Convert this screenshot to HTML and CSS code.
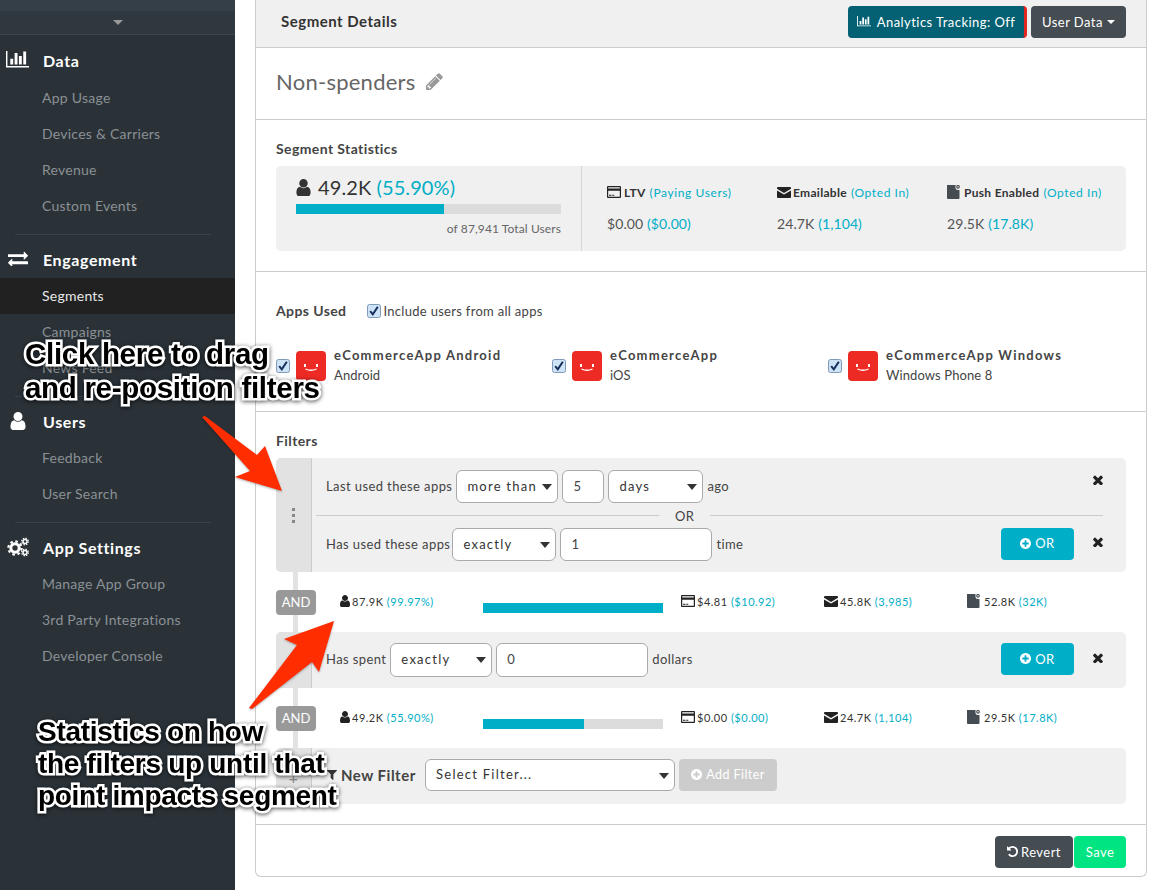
FILE: index.html
```html
<!DOCTYPE html>
<html lang="en">
<head>
  <meta charset="UTF-8">
  <title>Segment Details</title>
  <link rel="stylesheet" href="styles.css">
</head>
<body>
  <svg class="sprite" xmlns="http://www.w3.org/2000/svg">
    <defs>
      <symbol id="i-user" viewBox="256 128 1280 1536"><path d="M1536 1399q0 109-62.500 187t-150.500 78h-854q-88 0-150.500-78t-62.500-187q0-85 8.500-160.500t31.500-152 58.500-131 94-89 134.500-34.500q131 128 313 128t313-128q76 0 134.500 34.500t94 89 58.500 131 31.500 152 8.500 160.500zm-256-887q0 159-112.500 271.500t-271.500 112.500-271.500-112.500-112.500-271.500 112.500-271.500 271.500-112.500 271.500 112.500 112.500 271.500z"/></symbol>
      <symbol id="i-chart" viewBox="0 256 2048 1408"><path d="M640 896v512h-256v-512h256zm384-512v1024h-256v-1024h256zm1024 1152v128h-2048v-1536h128v1408h1920zm-640-896v768h-256v-768h256zm384-384v1152h-256v-1152h256z"/></symbol>
      <symbol id="i-swap" viewBox="0 256 1792 1280"><path d="M1792 1184v192q0 13-9.500 22.500t-22.500 9.500h-1376v192q0 13-9.500 22.500t-22.500 9.500q-12 0-24-10l-319-320q-9-9-9-22 0-14 9-23l320-320q9-9 23-9 13 0 22.500 9.500t9.500 22.500v192h1376q13 0 22.500 9.500t9.500 22.500zm0-544q0 14-9 23l-320 320q-9 9-23 9-13 0-22.500-9.500t-9.500-22.500v-192h-1376q-13 0-22.500-9.500t-9.500-22.500v-192q0-13 9.500-22.500t22.500-9.500h1376v-192q0-14 9-23t23-9q12 0 24 10l319 319q9 9 9 23z"/></symbol>
      <symbol id="i-cogs" viewBox="0 0 22 20">
        <circle cx="8" cy="11" r="4.2" fill="none" stroke="currentColor" stroke-width="3"/>
        <circle cx="8" cy="11" r="6.6" fill="none" stroke="currentColor" stroke-width="2.2" stroke-dasharray="2.6 2.6"/>
        <circle cx="18" cy="4.500" r="2" fill="none" stroke="currentColor" stroke-width="1.500"/>
        <circle cx="18" cy="4.500" r="3.300" fill="none" stroke="currentColor" stroke-width="1.300" stroke-dasharray="1.400 1.200"/>
        <circle cx="18" cy="15.500" r="2" fill="none" stroke="currentColor" stroke-width="1.500"/>
        <circle cx="18" cy="15.500" r="3.300" fill="none" stroke="currentColor" stroke-width="1.300" stroke-dasharray="1.400 1.200"/>
      </symbol>
      <symbol id="i-card" viewBox="0 0 14 12"><path fill-rule="evenodd" d="M1 0h12a1 1 0 0 1 1 1v10a1 1 0 0 1-1 1H1a1 1 0 0 1-1-1V1a1 1 0 0 1 1-1zm.2 1.200v1.300h11.600V1.200zm0 3.600v6h11.600v-6zM2 8.700h2.500v1H2zm3.300 0h2v1h-2z"/></symbol>
      <symbol id="i-mail" viewBox="0 0 14 11"><path d="M1 0h12a1 1 0 0 1 1 1v.8L7 6 0 1.800V1a1 1 0 0 1 1-1zM0 3.400l7 4.200 7-4.200V10a1 1 0 0 1-1 1H1a1 1 0 0 1-1-1z"/></symbol>
      <symbol id="i-push" viewBox="0 0 13 14"><path fill="#454c52" d="M0 0h8.500v2.500a2.500 2.500 0 0 0 2.500 2.500h1.500v8a1 1 0 0 1-1 1H1a1 1 0 0 1-1-1z"/><circle cx="11" cy="1.800" r="1.300" fill="none" stroke="#454c52" stroke-width="1.100"/></symbol>
      <symbol id="i-times" viewBox="300 300 1200 1200"><path d="M1490 1322q0 40-28 68l-136 136q-28 28-68 28t-68-28l-294-294-294 294q-28 28-68 28t-68-28l-136-136q-28-28-28-68t28-68l294-294-294-294q-28-28-28-68t28-68l136-136q28-28 68-28t68 28l294 294 294-294q28-28 68-28t68 28l136 136q28 28 28 68t-28 68l-294 294 294 294q28 28 28 68z"/></symbol>
      <symbol id="i-plus" viewBox="128 128 1536 1536"><path d="M1344 960v-128q0-26-19-45t-45-19h-256v-256q0-26-19-45t-45-19h-128q-26 0-45 19t-19 45v256h-256q-26 0-45 19t-19 45v128q0 26 19 45t45 19h256v256q0 26 19 45t45 19h128q26 0 45-19t19-45v-256h256q26 0 45-19t19-45zm320-64q0 209-103 385.500t-279.500 279.500-385.500 103-385.500-103-279.500-279.500-103-385.500 103-385.500 279.500-279.500 385.500-103 385.500 103 279.500 279.500 103 385.500z"/></symbol>
      <symbol id="i-undo" viewBox="128 128 1536 1536"><path d="M1664 896q0 156-61 298t-164 245-245 164-298 61q-172 0-327-72.500t-264-204.500q-7-10-6.500-22.500t8.500-20.500l137-138q10-9 25-9 16 2 23 12 73 95 179 147t225 52q104 0 198.500-40.500t163.500-109.500 109.500-163.500 40.500-198.500-40.500-198.500-109.500-163.500-163.500-109.500-198.500-40.500q-98 0-188 35.500t-160 101.500l137 138q31 30 14 69-17 40-59 40h-448q-26 0-45-19t-19-45v-448q0-42 40-59 39-17 69 14l130 129q107-101 244.500-156.500t284.500-55.500q156 0 298 61t245 164 164 245 61 298z"/></symbol>
      <symbol id="i-filter" viewBox="190 256 1410 1408"><path d="M1595 295q17 41-14 70l-493 493v742q0 42-39 59-13 5-25 5-27 0-45-19l-256-256q-19-19-19-45v-486l-493-493q-31-29-14-70 17-39 59-39h1280q42 0 59 39z"/></symbol>
      <symbol id="i-pencil" viewBox="128 128 1536 1536"><path d="M491 1536l91-91-235-235-91 91v107h128v128h107zm523-928q0-22-22-22-10 0-17 7l-542 542q-7 7-7 17 0 22 22 22 10 0 17-7l542-542q7-7 7-17zm-54-192l416 416-832 832h-416v-416zm683 96q0 53-37 90l-166 166-416-416 166-165q36-38 90-38 53 0 91 38l235 234q37 39 37 91z"/></symbol>
      <symbol id="i-check" viewBox="0 0 14 14"><rect x=".5" y=".5" width="13" height="13" rx="2" fill="#cfe3f7" stroke="#7f9ab8"/><path d="M3.200 7.200l2.600 3.200 5-7.600" fill="none" stroke="#16305c" stroke-width="2"/></symbol>
      <symbol id="i-app" viewBox="0 0 30 30"><rect width="30" height="30" rx="4" fill="#ee2a24"/><rect x="8" y="13" width="2" height="3" fill="#fff"/><rect x="20" y="13" width="2" height="3" fill="#fff"/><path d="M9.500 18q5.500 2.500 11 0" fill="none" stroke="#fff" stroke-width="1.300"/></symbol>
    </defs>
  </svg>

  <aside class="sidebar">
    <div class="side-top"></div>
    <div class="side-toggle"><span class="side-caret"></span></div>

    <nav class="side-group">
      <div class="side-head"><svg class="side-icon chart"><use href="#i-chart"/></svg>Data</div>
      <a class="side-link">App Usage</a>
      <a class="side-link">Devices &amp; Carriers</a>
      <a class="side-link">Revenue</a>
      <a class="side-link">Custom Events</a>
    </nav>
    <nav class="side-group">
      <div class="side-head"><svg class="side-icon swap"><use href="#i-swap"/></svg>Engagement</div>
      <a class="side-link active">Segments</a>
      <a class="side-link">Campaigns</a>
      <a class="side-link">News Feed</a>
    </nav>
    <nav class="side-group">
      <div class="side-head"><svg class="side-icon user"><use href="#i-user"/></svg>Users</div>
      <a class="side-link">Feedback</a>
      <a class="side-link">User Search</a>
    </nav>
    <nav class="side-group last">
      <div class="side-head"><svg class="side-icon cogs"><use href="#i-cogs"/></svg>App Settings</div>
      <a class="side-link">Manage App Group</a>
      <a class="side-link">3rd Party Integrations</a>
      <a class="side-link">Developer Console</a>
    </nav>
  </aside>

  <main class="panel">
    <header class="panel-head">
      <h2>Segment Details</h2>
      <div class="head-actions">
        <button class="btn btn-track"><svg class="btn-chart"><use href="#i-chart"/></svg>Analytics Tracking: Off</button>
        <button class="btn btn-dark">User Data<span class="mini-caret"></span></button>
      </div>
    </header>

    <section class="title-row">
      <h1>Non-spenders</h1>
      <svg class="pencil"><use href="#i-pencil"/></svg>
    </section>

    <section class="section stats-section">
      <h3>Segment Statistics</h3>
      <div class="stat-box">
        <div class="stat-main">
          <div class="stat-big"><svg class="big-user"><use href="#i-user"/></svg>49.2K <span class="teal">(55.90%)</span></div>
          <div class="bar"><div class="bar-fill" style="width:55.9%"></div></div>
          <div class="stat-total">of 87,941 Total Users</div>
        </div>
        <div class="stat-col">
          <div class="stat-label"><svg class="ic-card"><use href="#i-card"/></svg><b>LTV</b><span class="teal">(Paying Users)</span></div>
          <div class="stat-value">$0.00 <span class="teal">($0.00)</span></div>
        </div>
        <div class="stat-col">
          <div class="stat-label"><svg class="ic-mail"><use href="#i-mail"/></svg><b>Emailable</b><span class="teal">(Opted In)</span></div>
          <div class="stat-value">24.7K <span class="teal">(1,104)</span></div>
        </div>
        <div class="stat-col">
          <div class="stat-label"><svg class="ic-push"><use href="#i-push"/></svg><b>Push Enabled</b><span class="teal">(Opted In)</span></div>
          <div class="stat-value">29.5K <span class="teal">(17.8K)</span></div>
        </div>
      </div>
    </section>

    <section class="section apps-section">
      <div class="apps-top">
        <h3>Apps Used</h3>
        <label class="check-all"><svg class="check"><use href="#i-check"/></svg>Include users from all apps</label>
      </div>
      <div class="apps-list">
        <div class="app">
          <svg class="check"><use href="#i-check"/></svg>
          <svg class="app-icon"><use href="#i-app"/></svg>
          <div><div class="app-name">eCommerceApp Android</div><div class="app-os">Android</div></div>
        </div>
        <div class="app">
          <svg class="check"><use href="#i-check"/></svg>
          <svg class="app-icon"><use href="#i-app"/></svg>
          <div><div class="app-name">eCommerceApp</div><div class="app-os">iOS</div></div>
        </div>
        <div class="app">
          <svg class="check"><use href="#i-check"/></svg>
          <svg class="app-icon"><use href="#i-app"/></svg>
          <div><div class="app-name">eCommerceApp Windows</div><div class="app-os">Windows Phone 8</div></div>
        </div>
      </div>
    </section>

    <section class="section filters-section">
      <h3>Filters</h3>

      <div class="filter">
        <div class="handle"><span class="dots"></span></div>
        <div class="filter-body">
          <div class="filter-row">
            <span class="lbl">Last used these apps</span>
            <span class="select w-102"><select><option>more than</option></select></span>
            <input class="field w-42" type="text" value="5">
            <span class="select w-95"><select><option>days</option></select></span>
            <span class="lbl">ago</span>
            <svg class="remove up"><use href="#i-times"/></svg>
          </div>
          <div class="or-line"><span>OR</span></div>
          <div class="filter-row">
            <span class="lbl tight">Has used these apps</span>
            <span class="select w-104"><select><option>exactly</option></select></span>
            <input class="field w-152" type="text" value="1">
            <span class="lbl">time</span>
            <button class="btn btn-or"><svg class="plus"><use href="#i-plus"/></svg>OR</button>
            <svg class="remove"><use href="#i-times"/></svg>
          </div>
        </div>
      </div>

      <div class="stat-row">
        <span class="and">AND</span>
        <div class="mini first"><svg class="ic-user"><use href="#i-user"/></svg>87.9K <span class="teal">(99.97%)</span></div>
        <div class="bar mini-bar"><div class="bar-fill" style="width:100%"></div></div>
        <div class="mini"><svg class="ic-card"><use href="#i-card"/></svg>$4.81 <span class="teal">($10.92)</span></div>
        <div class="mini"><svg class="ic-mail"><use href="#i-mail"/></svg>45.8K <span class="teal">(3,985)</span></div>
        <div class="mini"><svg class="ic-push"><use href="#i-push"/></svg>52.8K <span class="teal">(32K)</span></div>
      </div>

      <div class="filter">
        <div class="handle"></div>
        <div class="filter-body single">
          <div class="filter-row">
            <span class="lbl">Has spent</span>
            <span class="select w-102"><select><option>exactly</option></select></span>
            <input class="field w-152" type="text" value="0">
            <span class="lbl">dollars</span>
            <button class="btn btn-or"><svg class="plus"><use href="#i-plus"/></svg>OR</button>
            <svg class="remove"><use href="#i-times"/></svg>
          </div>
        </div>
      </div>

      <div class="stat-row">
        <span class="and">AND</span>
        <div class="mini first"><svg class="ic-user"><use href="#i-user"/></svg>49.2K <span class="teal">(55.90%)</span></div>
        <div class="bar mini-bar"><div class="bar-fill" style="width:56%"></div></div>
        <div class="mini"><svg class="ic-card"><use href="#i-card"/></svg>$0.00 <span class="teal">($0.00)</span></div>
        <div class="mini"><svg class="ic-mail"><use href="#i-mail"/></svg>24.7K <span class="teal">(1,104)</span></div>
        <div class="mini"><svg class="ic-push"><use href="#i-push"/></svg>29.5K <span class="teal">(17.8K)</span></div>
      </div>

      <div class="filter">
        <div class="handle plus-handle">+</div>
        <div class="filter-body new-filter">
          <svg class="funnel"><use href="#i-filter"/></svg>
          <b class="new-label">New Filter</b>
          <span class="select w-250"><select><option>Select Filter...</option></select></span>
          <button class="btn btn-add"><svg class="plus"><use href="#i-plus"/></svg>Add Filter</button>
        </div>
      </div>
    </section>

    <footer class="panel-foot">
      <button class="btn btn-dark btn-revert"><svg class="undo"><use href="#i-undo"/></svg>Revert</button>
      <button class="btn btn-save">Save</button>
    </footer>
  </main>

  <!-- annotations pasted over the screenshot -->
  <svg class="arrows" viewBox="0 0 1176 890">
    <polygon points="202,417 205,416 257,455 265,446 282,491 235,477 250,471"/>
    <polygon points="249,708 252,709 312,662 319,672 334,621 284,639 297,645"/>
  </svg>
  <div class="note note-drag">Click here to drag<br>and re-position filters</div>
  <div class="note note-stats">Statistics on how<br>the filters up until that<br>point impacts segment</div>
</body>
</html>
```

FILE: styles.css
```css
* {
  box-sizing: border-box;
}

html, body {
  height: 890px;
  margin: 0;
  overflow: hidden;
}

body {
  display: flex;
  background-color: #fff;
  font-family: Lato, "Open Sans", sans-serif;
  font-size: 13px;
  letter-spacing: .4px;
  color: #444;
}

h1, h2, h3 {
  margin: 0;
}

.sprite {
  display: none;
}

svg {
  fill: currentColor;
}

.teal {
  color: #00aec7;
}

/* sidebar */
.sidebar {
  width: 235px;
  flex-shrink: 0;
  background-color: #2a3238;
}

.side-top {
  height: 11px;
  background-color: #353f47;
}

.side-toggle {
  height: 24px;
  display: flex;
  justify-content: center;
  align-items: center;
  background-color: #2f383f;
  border-bottom: 1px solid #3a444c;
}

.side-caret {
  border: 5px solid transparent;
  border-top: 5px solid #999;
  border-bottom: 0;
}

.side-group {
  position: relative;
  padding-bottom: 11px;
  margin-bottom: 7px;
  background: linear-gradient(#39434b, #39434b) 15px 100% / 196px 1px no-repeat;
}

.side-group:first-of-type {
  margin-top: 8px;
}

.side-group:first-of-type .side-head {
  height: 37px;
  padding-bottom: 3px;
}

.side-group.last {
  background: none;
}

.side-head {
  height: 36px;
  display: flex;
  align-items: center;
  padding: 0 0 2px 43px;
  font-size: 16px;
  font-weight: 700;
  letter-spacing: .6px;
  color: #fff;
  position: relative;
}

.side-icon {
  position: absolute;
  color: #fff;
}

.side-icon.chart { left: 6px; top: 8px; width: 23px; height: 17px; }
.side-icon.swap { left: 8px; top: 9px; width: 20px; height: 15px; }
.side-icon.user { left: 10px; top: 8px; width: 16px; height: 18px; }
.side-icon.cogs { left: 7px; top: 7px; width: 22px; height: 20px; }

.side-link {
  display: block;
  height: 36px;
  line-height: 36px;
  padding-left: 42px;
  font-size: 14px;
  letter-spacing: .25px;
  color: #8b9094;
}

.side-link.active {
  background-color: #212121;
  color: #e8e8e8;
}

/* main panel */
.panel {
  width: 892px;
  height: 877px;
  margin-left: 20px;
  display: flex;
  flex-direction: column;
  border: 1px solid #ccc;
  border-top: 0;
  border-radius: 0 0 6px 6px;
}

.panel-head {
  height: 48px;
  flex-shrink: 0;
  display: flex;
  justify-content: space-between;
  align-items: center;
  padding: 0 20px 3px 25px;
  background-color: #f0f0f0;
  border-bottom: 1px solid #ccc;
}

.panel-head h2 {
  padding-bottom: 2px;
  font-size: 15px;
  font-weight: 700;
  letter-spacing: .5px;
  color: #333;
}

.head-actions {
  display: flex;
  gap: 4px;
}

.btn {
  display: inline-flex;
  align-items: center;
  justify-content: center;
  height: 32px;
  border: 0;
  padding: 0 0 1px;
  border-radius: 4px;
  color: #fff;
  font-family: inherit;
  font-size: 13px;
  letter-spacing: .45px;
}

.btn-track {
  width: 179px;
  background-color: #046173;
  border-right: 3px solid #e3261f;
}

.btn-chart {
  width: 14px;
  height: 11px;
  margin-right: 6px;
}

.btn-dark {
  background-color: #454c52;
  width: 95px;
}

.mini-caret {
  margin-left: 4px;
  border: 4px solid transparent;
  border-top: 4px solid #fff;
  border-bottom: 0;
}

.title-row {
  height: 72px;
  flex-shrink: 0;
  display: flex;
  align-items: center;
  padding: 0 0 5px 20px;
  border-bottom: 1px solid #ccc;
}

.title-row h1 {
  font-size: 22px;
  font-weight: 400;
  letter-spacing: .25px;
  color: #666;
}

.pencil {
  width: 17px;
  height: 17px;
  margin-left: 10px;
  color: #999;
}

.section {
  flex-shrink: 0;
  padding: 0 20px;
  border-bottom: 1px solid #ccc;
}

.section h3 {
  font-size: 14px;
  font-weight: 700;
  line-height: 20px;
  color: #444;
}

.stats-section {
  height: 152px;
  padding-top: 19px;
}

.stat-box {
  height: 85px;
  margin-top: 7px;
  display: flex;
  background-color: #f0f0f0;
  border-radius: 5px;
}

.stat-main {
  width: 306px;
  padding: 9px 20px 0;
  border-right: 1px solid #d6d6d6;
}

.stat-big {
  display: flex;
  align-items: center;
  height: 24px;
  font-size: 20px;
  letter-spacing: .1px;
  color: #333;
  white-space: pre;
}

.big-user {
  width: 15px;
  height: 17px;
  margin-right: 7px;
}

.bar {
  height: 10px;
  background-color: #dcdcdc;
}

.stat-main .bar {
  margin-top: 5px;
}

.bar-fill {
  height: 100%;
  background-color: #00aec7;
}

.stat-total {
  margin-top: 7px;
  text-align: right;
  font-size: 12px;
  letter-spacing: .1px;
  color: #666;
}

.stat-col {
  width: 170px;
  padding: 17px 0 0 25px;
}

.stat-label {
  display: flex;
  align-items: center;
  height: 18px;
  font-size: 12px;
  color: #333;
  white-space: pre;
}

.stat-label b {
  font-weight: 700;
  letter-spacing: .3px;
  margin-right: 4px;
}

.stat-label .teal {
  letter-spacing: .6px;
}

.stat-value {
  margin-top: 14px;
  font-size: 14px;
  color: #555;
  letter-spacing: .1px;
}

.ic-card { width: 14px; height: 12px; margin-right: 3px; color: #222; flex-shrink: 0; }
.ic-mail { width: 14px; height: 11px; margin-right: 2px; color: #222; flex-shrink: 0; }
.ic-push { width: 13px; height: 14px; margin-right: 4px; flex-shrink: 0; }
.ic-user { width: 10px; height: 12px; margin-right: 2px; color: #222; flex-shrink: 0; }

/* apps */
.apps-section {
  height: 140px;
  padding-top: 29px;
}

.apps-top {
  display: flex;
  align-items: center;
}

.check {
  width: 14px;
  height: 14px;
  flex-shrink: 0;
}

.check-all {
  display: flex;
  align-items: center;
  margin-left: 21px;
  gap: 2px;
  letter-spacing: .3px;
}

.apps-list {
  display: flex;
  margin-top: 25px;
}

.app {
  width: 276px;
  display: flex;
  align-items: center;
  gap: 6px;
}

.app-icon {
  width: 30px;
  height: 30px;
  flex-shrink: 0;
  margin-right: 2px;
}

.app-name {
  font-weight: 700;
  line-height: 18px;
  color: #444;
  letter-spacing: 1.250px;
}

.app-os {
  line-height: 22px;
  letter-spacing: .1px;
}

/* filters */
.filters-section {
  height: 413px;
  padding-top: 19px;
}

.filters-section h3 {
  margin-bottom: 7px;
}

.filter {
  display: flex;
  background-color: #f0f0f0;
  border-radius: 5px;
}

.handle {
  width: 36px;
  flex-shrink: 0;
  display: flex;
  justify-content: center;
  align-items: center;
  background-color: #e2e2e2;
  border-right: 1px solid #ccc;
  border-radius: 5px 0 0 5px;
}

.dots {
  width: 3px;
  height: 3px;
  background-color: #888;
  box-shadow: 0 -6px #888, 0 6px #888;
}

.plus-handle {
  color: #888;
  font-size: 16px;
  padding-top: 3px;
}

.filter-body {
  flex: 1;
  padding: 12px 20px 11px 14px;
}

.filter-body.single {
  padding: 11px 20px 11px 14px;
}

.filter-body.single .filter-row {
  height: 34px;
}

.filter-body.single .select,
.filter-body.single .field {
  height: 34px;
}

.filter-row {
  display: flex;
  align-items: center;
  gap: 4px;
  height: 33px;
}

.lbl {
  padding-bottom: 2px;
}

.tight {
  margin-right: -2px;
}

.select {
  position: relative;
  display: block;
  height: 33px;
}

.select::after {
  content: "";
  position: absolute;
  right: 6px;
  top: 14px;
  border: 5px solid transparent;
  border-top: 6px solid #333;
  border-bottom: 0;
  pointer-events: none;
}

.select select {
  width: 100%;
  height: 100%;
  appearance: none;
  background-color: #fff;
  border: 1px solid #aaa;
  border-radius: 6px;
  padding: 0 10px 2px;
  font-family: inherit;
  font-size: 13px;
  letter-spacing: 1.250px;
  color: #333;
}

.field {
  height: 33px;
  background-color: #fff;
  border: 1px solid #aaa;
  border-radius: 6px;
  padding: 0 10px 2px;
  font-family: inherit;
  font-size: 13px;
  letter-spacing: .5px;
  color: #444;
}

.w-42 { width: 42px; }
.w-95 { width: 95px; }
.w-102 { width: 102px; }
.w-104 { width: 104px; }
.w-152 { width: 152px; }
.w-250 { width: 250px; }

.remove {
  width: 10px;
  height: 10px;
  margin: 0 3px 5px 15px;
  color: #222;
  flex-shrink: 0;
}

.remove.up {
  margin-left: auto;
  margin-bottom: 14px;
}

.or-line {
  height: 25px;
  display: flex;
  align-items: center;
  margin-right: 3px;
  margin-left: -10px;
  background: linear-gradient(#ccc, #ccc) 0 50% / 100% 1px no-repeat;
}

.or-line span {
  margin-left: 343px;
  padding: 0 16px;
  background-color: #f0f0f0;
  font-size: 13px;
}

.btn-or {
  width: 73px;
  margin: 0 0 2px auto;
  background-color: #00aec7;
  font-size: 13px;
}

.plus {
  width: 11px;
  height: 11px;
  margin-right: 4px;
}

/* stat rows between filters */
.stat-row {
  height: 60px;
  display: flex;
  align-items: center;
  background: linear-gradient(#e2e2e2, #e2e2e2) 17px 0 / 5px 100% no-repeat;
}

.and {
  width: 40px;
  height: 25px;
  line-height: 25px;
  text-align: center;
  background-color: #999;
  border-radius: 4px;
  color: #fff;
  font-size: 13px;
  letter-spacing: 0;
}

.mini {
  width: 143px;
  display: flex;
  align-items: center;
  margin-bottom: 2px;
  font-size: 11px;
  letter-spacing: .5px;
  color: #333;
  white-space: pre;
}

.mini .ic-card {
  margin-right: 2px;
}

.mini.first {
  margin-left: 24px;
}

.mini-bar {
  width: 180px;
  margin: 12px 18px 0 0;
}

/* new filter row */
.new-filter {
  display: flex;
  align-items: center;
  padding: 0 0 2px 15px;
  height: 56px;
}

.funnel {
  width: 10px;
  height: 10px;
  margin-right: 4px;
  color: #333;
}

.new-label {
  width: 84px;
  font-size: 15px;
  letter-spacing: .5px;
  color: #444;
}

.new-filter .select {
  height: 32px;
}

.btn-add {
  width: 98px;
  margin-left: 4px;
  background-color: #ccc;
  font-size: 12.500px;
}

.panel-foot {
  flex: 1;
  display: flex;
  justify-content: flex-end;
  align-items: flex-start;
  gap: 1px;
  padding: 11px 20px 0;
}

.btn-revert {
  width: 78px;
}

.undo {
  width: 11px;
  height: 11px;
  margin-right: 3px;
}

.btn-save {
  width: 52px;
  background-color: #00e581;
}

/* annotations */
.arrows {
  position: absolute;
  left: 0;
  top: 0;
  width: 1176px;
  height: 890px;
  fill: #ff2d00;
  filter: drop-shadow(0 1px 1px rgba(0, 0, 0, .3));
}

.note {
  position: absolute;
  font-family: "Liberation Sans", Arial, sans-serif;
  font-weight: 700;
  color: #000;
  -webkit-text-stroke: 5px #fff;
  paint-order: stroke fill;
  filter: drop-shadow(0 1px 2px rgba(0, 0, 0, .7));
  white-space: nowrap;
}

.note-drag {
  left: 25px;
  top: 337px;
  font-size: 29.500px;
  letter-spacing: -.3px;
  line-height: 34px;
}

.note-stats {
  left: 38px;
  top: 716px;
  font-size: 28px;
  letter-spacing: -.3px;
  line-height: 32px;
}
```
